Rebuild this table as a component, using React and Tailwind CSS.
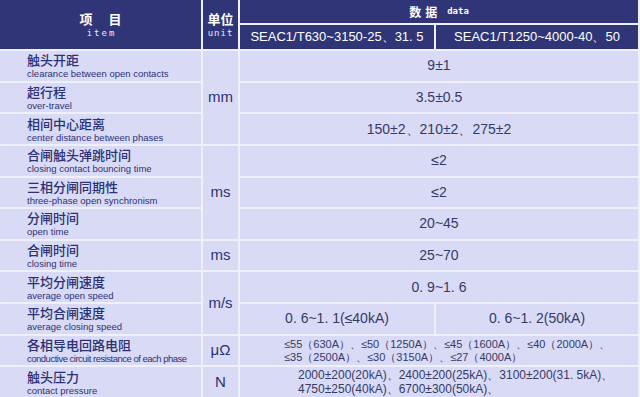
import React from "react";

const CELL = "bg-[#d9dbf6] font-['Liberation_Sans',Arial,sans-serif]";
const HEAD = "bg-[#2f3577] text-white";

function Item({ zh, en, pos, tight }) {
  return (
    <div className={CELL + " col-start-1 flex flex-col justify-center pl-[27px] " + pos}>
      <div className="font-['Noto_Sans_CJK_SC',sans-serif] text-[13px] leading-[16px] font-medium text-[#2b3175]">
        {zh}
      </div>
      <div className={"text-[9.5px] leading-[11px] text-[#2b3175] " + (tight ? "tracking-[-0.5px]" : "")}>
        {en}
      </div>
    </div>
  );
}

function Unit({ children, pos }) {
  return (
    <div className={CELL + " col-start-2 flex items-center justify-center text-[15px] text-[#2b3175] " + pos}>
      {children}
    </div>
  );
}

function Data({ children, pos }) {
  return (
    <div className={CELL + " flex items-center justify-center text-[14px] text-[#353a66] " + pos}>
      {children}
    </div>
  );
}

export default function App() {
  return (
    <div className="h-[397px] w-[640px] overflow-hidden bg-[#eef0fb] pr-[2px]">
      <div className="grid h-[397px] grid-cols-[201px_35px_194px_202px] grid-rows-[23px_24px_repeat(11,1fr)] gap-[2px]">
        {/* header */}
        <div className={HEAD + " row-span-2 flex flex-col items-center justify-center"}>
          <div className="pl-[16px] font-['Noto_Sans_CJK_SC',sans-serif] text-[13px] leading-[16px] font-bold tracking-[16px]">
            项目
          </div>
          <div className="pl-[2px] font-['DejaVu_Sans_Mono',monospace] text-[9px] leading-[12px] tracking-[2px] text-[#e6e8ff]">
            item
          </div>
        </div>
        <div className={HEAD + " row-span-2 flex flex-col items-center justify-center"}>
          <div className="font-['Noto_Sans_CJK_SC',sans-serif] text-[13px] leading-[16px] font-bold">单位</div>
          <div className="font-['DejaVu_Sans_Mono',monospace] text-[9px] leading-[12px] tracking-[1px] text-[#e6e8ff]">
            unit
          </div>
        </div>
        <div className={HEAD + " col-span-2 flex items-center justify-center gap-[6px]"}>
          <span className="font-['Noto_Sans_CJK_SC',sans-serif] text-[12px] font-bold tracking-[4px]">数据</span>
          <span className="font-['DejaVu_Sans_Mono',monospace] text-[9px] font-bold">data</span>
        </div>
        <div className={HEAD + " flex items-center justify-center font-['Liberation_Sans',Arial,sans-serif] text-[13px]"}>
          SEAC1/T630~3150-25、31. 5
        </div>
        <div className={HEAD + " flex items-center justify-center font-['Liberation_Sans',Arial,sans-serif] text-[13px]"}>
          SEAC1/T1250~4000-40、50
        </div>

        {/* body */}
        <Item pos="row-start-3" zh="触头开距" en="clearance between open contacts" />
        <Item pos="row-start-4" zh="超行程" en="over-travel" />
        <Item pos="row-start-5" zh="相间中心距离" en="center distance between phases" />
        <Item pos="row-start-6" zh="合闸触头弹跳时间" en="closing contact bouncing time" />
        <Item pos="row-start-7" zh="三相分闸同期性" en="three-phase open synchronism" />
        <Item pos="row-start-8" zh="分闸时间" en="open time" />
        <Item pos="row-start-9" zh="合闸时间" en="closing time" />
        <Item pos="row-start-10" zh="平均分闸速度" en="average open speed" />
        <Item pos="row-start-11" zh="平均合闸速度" en="average closing speed" />
        <Item pos="row-start-12" zh="各相导电回路电阻" en="conductive circuit resistance of each phase" tight />
        <Item pos="row-start-13" zh="触头压力" en="contact pressure" />

        <Unit pos="row-start-3 row-end-6">mm</Unit>
        <Unit pos="row-start-6 row-end-9">ms</Unit>
        <Unit pos="row-start-9">ms</Unit>
        <Unit pos="row-start-10 row-end-12">m/s</Unit>
        <Unit pos="row-start-12">μΩ</Unit>
        <Unit pos="row-start-13">N</Unit>

        <Data pos="row-start-3 col-start-3 col-end-5">9±1</Data>
        <Data pos="row-start-4 col-start-3 col-end-5">3.5±0.5</Data>
        <Data pos="row-start-5 col-start-3 col-end-5">150±2、210±2、275±2</Data>
        <Data pos="row-start-6 col-start-3 col-end-5">≤2</Data>
        <Data pos="row-start-7 col-start-3 col-end-5">≤2</Data>
        <Data pos="row-start-8 col-start-3 col-end-5">20~45</Data>
        <Data pos="row-start-9 col-start-3 col-end-5">25~70</Data>
        <Data pos="row-start-10 col-start-3 col-end-5">0. 9~1. 6</Data>
        <Data pos="row-start-11 col-start-3">0. 6~1. 1(≤40kA)</Data>
        <Data pos="row-start-11 col-start-4">0. 6~1. 2(50kA)</Data>
        <div className={CELL + " row-start-12 col-start-3 col-end-5 flex flex-col justify-center pl-[44px] text-[11px] leading-[13px] text-[#353a66]"}>
          <div>≤55（630A）、≤50（1250A）、≤45（1600A）、≤40（2000A）、</div>
          <div>≤35（2500A）、≤30（3150A）、≤27（4000A）</div>
        </div>
        <div className={CELL + " row-start-13 col-start-3 col-end-5 flex flex-col justify-center pl-[58px] text-[12px] leading-[14px] text-[#353a66]"}>
          <div>2000±200(20kA)、2400±200(25kA)、3100±200(31. 5kA)、</div>
          <div>4750±250(40kA)、6700±300(50kA)、</div>
        </div>
      </div>
    </div>
  );
}
